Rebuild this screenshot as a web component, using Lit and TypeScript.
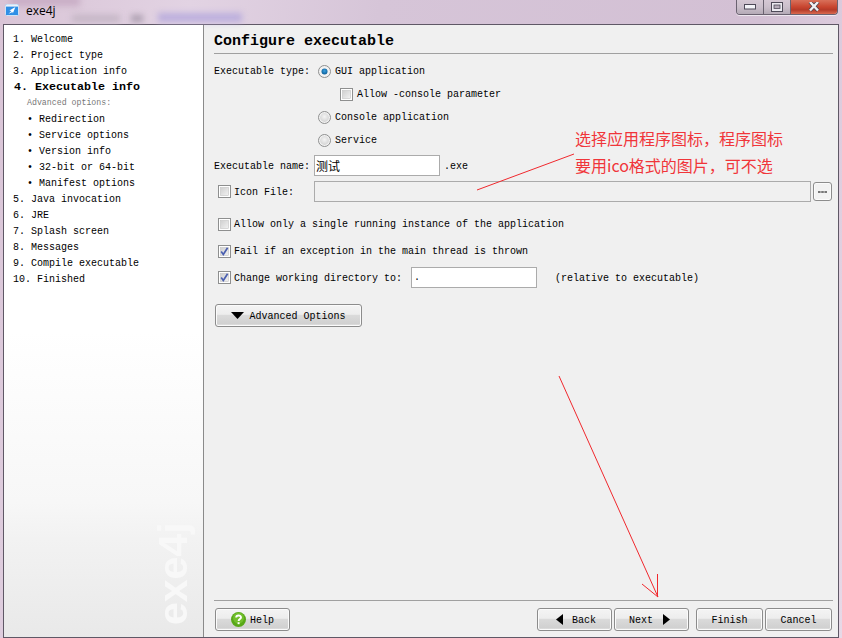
import { LitElement, html, css, svg } from "lit";
import { customElement } from "lit/decorators.js";

const radio = (on: boolean) => html`<svg class="ctl" width="13" height="13" viewBox="0 0 13 13">
  <defs>
    <radialGradient id="rg${on ? 1 : 0}" cx="0.5" cy="0.4" r="0.6"><stop offset="0" stop-color="${on ? "#3aa0e0" : "#f4f4f4"}"/><stop offset="1" stop-color="${on ? "#0a5c96" : "#d4d4d4"}"/></radialGradient>
  </defs>
  <circle cx="6.5" cy="6.5" r="6" fill="#f2f2f2" stroke="#8e8f8f"/>
  <circle cx="6.5" cy="6.5" r="${on ? 3 : 4.4}" fill="url(#rg${on ? 1 : 0})"/>
</svg>`;

const check = (on: boolean) => html`<svg class="ctl" width="13" height="13" viewBox="0 0 13 13">
  <defs>
    <linearGradient id="cg${on ? 1 : 0}" x1="0" y1="0" x2="1" y2="1"><stop offset="0" stop-color="#cfcfcf"/><stop offset="1" stop-color="#f2f2f2"/></linearGradient>
  </defs>
  <rect x=".5" y=".5" width="12" height="12" fill="#fff" stroke="#8e8f8f"/>
  <rect x="2.5" y="2.5" width="8" height="8" fill="url(#cg${on ? 1 : 0})" stroke="#c4c4c4" stroke-width=".6"/>
  ${on ? svg`<path d="M3.2 6.6 L5.3 9.4 L9.6 2.8" fill="none" stroke="#4a5fb0" stroke-width="1.7"/>` : ""}
</svg>`;

@customElement("app-root")
export class AppRoot extends LitElement {
  static styles = css`
    :host { display: block; width: 842px; height: 638px; overflow: hidden; }
    * { box-sizing: border-box; }
    .win {
      position: relative; width: 842px; height: 638px; display: flex; flex-direction: column;
      overflow: hidden; color: #000;
      font: 10px/1 "Liberation Mono", "Noto Sans CJK SC", monospace;
      background: linear-gradient(100deg, #d9c4d6 0%, #e2d3e3 20%, #d6c5d8 40%, #d3c0d4 80%, #e7d9e7 100%);
    }
    .blur { position: absolute; filter: blur(3px); }
    .b1 { left: 10px; top: -4px; width: 70px; height: 10px; background: #c9aec6; }
    .b2 { left: 72px; top: 15px; width: 48px; height: 7px; background: #c3b5c4; }
    .b3 { left: 131px; top: 15px; width: 12px; height: 7px; background: #a99cad; }
    .b4 { left: 158px; top: 13px; width: 84px; height: 9px; background: #bbaedd; }
    .titlebar { height: 24px; flex: none; display: flex; align-items: flex-start; position: relative; }
    .appicon { margin: 4px 0 0 5px; }
    .apptitle { margin: 3px 0 0 7px; font: 12px/15px "Open Sans", "Liberation Sans", sans-serif; }
    .controls {
      margin-left: auto; margin-right: 4px; width: 102px; height: 15px; display: flex;
      border: 1px solid #6a6270; border-top: 0; border-radius: 0 0 4px 4px; overflow: hidden;
      box-shadow: 0 1px 0 rgba(255,255,255,.6);
    }
    .cb { display: flex; align-items: center; justify-content: center; width: 27px; flex: none;
      background: linear-gradient(#d5c8d4, #cbbfcb 50%, #b4aab6); border-right: 1px solid #6a6270; }
    .cb.x { flex: 1; border-right: 0; background: linear-gradient(#d8705a, #c8452f 50%, #b53a28 70%, #d96a50); }
    .client { flex: 1; margin: 0 3px; display: flex; border: 1px solid #5f5866; background: #f0f0f0; min-height: 0; }
    .side {
      width: 200px; flex: none; position: relative; padding-top: 6px; overflow: hidden;
      border-right: 1px solid #8a8a8a;
      background: linear-gradient(#fff 0, #fff 50%, #f7f7f7 78%, #f2f2f2 84%, #e9e9e9 100%);
    }
    .item { height: 16px; line-height: 17px; padding-left: 9px; white-space: pre; }
    .item.cur { font-weight: 700; font-size: 11.67px; padding-left: 10px; }
    .item.sub { padding-left: 23px; }
    .item.hd { padding-left: 23px; font-size: 8.25px; line-height: 15px; color: #777; }
    .mark {
      position: absolute; left: 149px; top: 490px; height: 110px; width: 40px; white-space: nowrap;
      writing-mode: vertical-rl; transform: rotate(180deg); text-align: left;
      font: 700 41px/40px "Liberation Sans", sans-serif; color: #f8f8f8;
    }
    .main { flex: 1; min-width: 0; display: flex; flex-direction: column; padding: 0 5px 6px 10px; }
    .title { height: 29px; flex: none; font-weight: 700; font-size: 15px; line-height: 30px; padding-top: 2px; border-bottom: 1px solid #a0a0a0; }
    .row { display: flex; align-items: center; height: 20px; flex: none; white-space: pre; }
    .row > span { line-height: 12px; padding-top: 2px; }
    .inp { background: #fff; border: 1px solid #ababab; height: 21px; display: flex; align-items: center; padding-left: 2px; flex: none; }
    .inp.file { width: 497px; background: #f0f0f0; }
    .ctl { flex: none; display: block; }
    .row > .lbl { width: 100px; flex: none; }
    .r1 { margin-top: 7px; }
    .r2 { margin-top: 3px; padding-left: 126px; }
    .r3 { margin-top: 3px; padding-left: 104px; }
    .r4 { margin-top: 5px; height: 21px; }
    .r5 { margin-top: 5px; height: 21px; padding-left: 4px; }
    .r6 { margin-top: 12px; padding-left: 4px; }
    .r7 { margin-top: 7px; padding-left: 4px; }
    .r8 { margin-top: 6px; height: 21px; padding-left: 4px; }
    .row > .gap4 { margin-left: 4px; }
    .nameinp { width: 126px; padding-left: 1px; font: 12px/1 "Noto Sans CJK SC", sans-serif; }
    .row > .iconlbl { width: 80px; margin-left: 3px; flex: none; }
    .dirinp { width: 126px; margin-left: 9px; }
    .row > .rel { margin-left: 18px; }
    .row > .lab5 { margin-left: 3px; }
    .btn {
      display: flex; align-items: center; justify-content: center; height: 23px; padding: 0;
      border: 1px solid #8c8c8c; border-radius: 3px; color: #000; font: inherit; flex: none;
      box-shadow: inset 0 0 0 1px #fbfbfb;
      background: linear-gradient(#f4f4f4, #ededed 44%, #dadada 50%, #d1d1d1 88%, #e6e6e6);
    }
    .btn > span { line-height: 12px; padding-top: 2px; }
    .dots { width: 19px; height: 19px; margin-left: 2px; background: #f2f2f2; }
    .adv { width: 147px; margin: 16px 0 0 1px; gap: 5px; }
    .foot { margin-top: auto; border-top: 1px solid #a0a0a0; padding: 7px 1px 0 0; display: flex; }
    .help { width: 75px; margin-left: 1px; gap: 4px; }
    .back { width: 75px; margin-left: auto; gap: 9px; padding-left: 3px; }
    .next { width: 75px; margin-left: 2px; gap: 10px; padding-right: 4px; }
    .finish { width: 67px; margin-left: 7px; }
    .cancel { width: 67px; margin-left: 2px; }
    .overlay { position: absolute; left: 0; top: 0; pointer-events: none; }
    .note {
      position: absolute; left: 575px; color: #f0353a; white-space: pre;
      font: 400 16px/20px "Noto Sans CJK SC", sans-serif;
    }
    .n1 { top: 128px; } .n2 { top: 155px; }
  `;

  render() {
    const nav1 = ["1. Welcome", "2. Project type", "3. Application info"];
    const nav2 = ["• Redirection", "• Service options", "• Version info", "• 32-bit or 64-bit", "• Manifest options"];
    const nav3 = ["5. Java invocation", "6. JRE", "7. Splash screen", "8. Messages", "9. Compile executable", "10. Finished"];
    return html`<div class="win">
      <div class="blur b1"></div><div class="blur b2"></div><div class="blur b3"></div><div class="blur b4"></div>
      <div class="titlebar">
        <svg class="appicon" width="14" height="12" viewBox="0 0 14 12">
          <rect x=".5" y=".5" width="13" height="11" rx="1" fill="#2f8fe6" stroke="#cfe2f5"/>
          <rect x="1" y="1" width="12" height="1.6" fill="#eef2f8"/>
          <path d="M10.4 3 L4.4 6.4 L6.4 7 L3.6 9.8 L7.6 8 L7.8 9.4 Z" fill="#fff"/>
        </svg>
        <span class="apptitle">exe4j</span>
        <div class="controls">
          <div class="cb"><svg width="12" height="6" viewBox="0 0 12 6"><rect x=".5" y=".5" width="11" height="4.5" fill="#f4f4f8" stroke="#4e4a58"/></svg></div>
          <div class="cb"><svg width="12" height="10" viewBox="0 0 12 10"><rect x=".5" y=".5" width="11" height="9" fill="#eceaf0" stroke="#4e4a58"/><rect x="3" y="3" width="6" height="3.5" fill="#b5abb8" stroke="#4e4a58" stroke-width=".8"/></svg></div>
          <div class="cb x"><svg width="12" height="10" viewBox="0 0 12 10"><path d="M2 0 L10 8.5 M10 0 L2 8.5" stroke="#4e4450" stroke-width="4"/><path d="M2 0 L10 8.5 M10 0 L2 8.5" stroke="#f0f0f4" stroke-width="2.4"/></svg></div>
        </div>
      </div>
      <div class="client">
        <div class="side">
          ${nav1.map((t) => html`<div class="item">${t}</div>`)}
          <div class="item cur">4. Executable info</div>
          <div class="item hd">Advanced options:</div>
          ${nav2.map((t) => html`<div class="item sub">${t}</div>`)}
          ${nav3.map((t) => html`<div class="item">${t}</div>`)}
          <div class="mark">exe4j</div>
        </div>
        <div class="main">
          <div class="title">Configure executable</div>
          <div class="row r1"><span class="lbl">Executable type:</span><span class="gap4"></span>${radio(true)}<span class="gap4">GUI application</span></div>
          <div class="row r2">${check(false)}<span class="gap4">Allow -console parameter</span></div>
          <div class="row r3">${radio(false)}<span class="gap4">Console application</span></div>
          <div class="row r3">${radio(false)}<span class="gap4">Service</span></div>
          <div class="row r4"><span class="lbl">Executable name:</span><div class="inp nameinp">测试</div><span class="gap4">.exe</span></div>
          <div class="row r5">${check(false)}<span class="iconlbl">Icon File:</span><div class="inp file"></div><button class="btn dots" aria-label="Browse"><svg width="9" height="2" viewBox="0 0 9 2"><path d="M0 0h2.6v2H0zM3.2 0h2.6v2H3.2zM6.4 0H9v2H6.4z" fill="#777"/></svg></button></div>
          <div class="row r6">${check(false)}<span class="lab5">Allow only a single running instance of the application</span></div>
          <div class="row r7">${check(true)}<span class="lab5">Fail if an exception in the main thread is thrown</span></div>
          <div class="row r8">${check(true)}<span class="lab5">Change working directory to:</span><div class="inp dirinp">.</div><span class="rel">(relative to executable)</span></div>
          <button class="btn adv">
            <svg width="13" height="7" viewBox="0 0 13 7"><path d="M0 0H13L6.5 7Z" fill="#000"/></svg>
            <span>Advanced Options</span>
          </button>
          <div class="foot">
            <button class="btn help">
              <svg width="15" height="15" viewBox="0 0 15 15"><circle cx="7.5" cy="7.5" r="7.5" fill="#58a818"/><circle cx="7.5" cy="6" r="5.5" fill="#72bf2c"/><path d="M5.2 5.6 C5.2 2.8 10 2.8 10 5.4 C10 7 7.6 7 7.6 9" fill="none" stroke="#fff" stroke-width="1.9"/><rect x="6.6" y="10.2" width="2" height="2" fill="#fff"/></svg>
              <span>Help</span>
            </button>
            <button class="btn back"><svg width="7" height="11" viewBox="0 0 7 11"><path d="M7 0V11L0 5.5Z" fill="#000"/></svg><span>Back</span></button>
            <button class="btn next"><span>Next</span><svg width="7" height="11" viewBox="0 0 7 11"><path d="M0 0V11L7 5.5Z" fill="#000"/></svg></button>
            <button class="btn finish"><span>Finish</span></button>
            <button class="btn cancel"><span>Cancel</span></button>
          </div>
        </div>
      </div>
      <svg class="overlay" width="842" height="638" viewBox="0 0 842 638">
        <path d="M477 190 L574 154" stroke="#f0282d" fill="none"/>
        <path d="M559 376 L658 597 M642 584 L658 597 M657.5 574 L657.5 597" stroke="#f0282d" fill="none"/>
      </svg>
      <div class="note n1">选择应用程序图标，程序图标</div>
      <div class="note n2">要用ico格式的图片，可不选</div>
    </div>`;
  }
}
